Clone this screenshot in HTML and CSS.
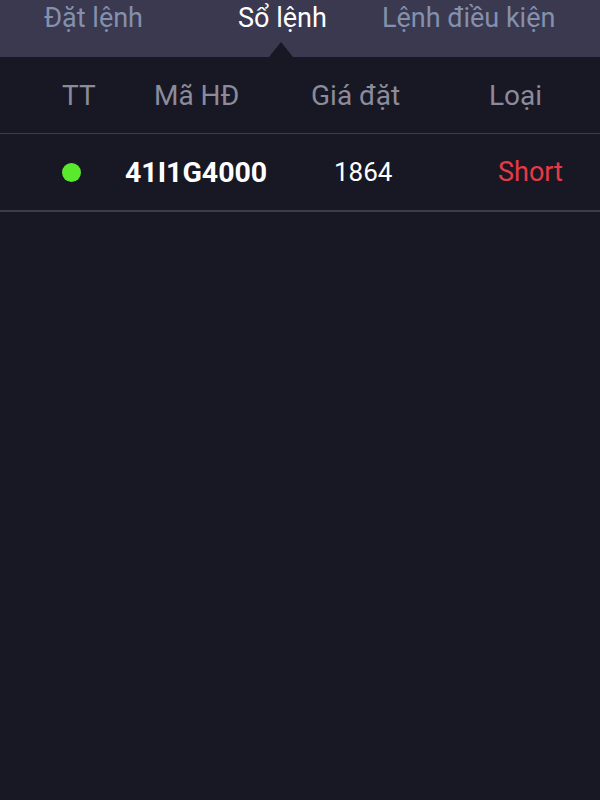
FILE: index.html
```html
<!DOCTYPE html>
<html lang="vi">
<head>
<meta charset="utf-8">
<link rel="stylesheet" href="styles.css">
</head>
<body>
<nav class="tabs">
  <div class="tab">Đặt lệnh</div>
  <div class="tab active">Sổ lệnh</div>
  <div class="tab">Lệnh điều kiện</div>
</nav>
<div class="table">
  <div class="head">
    <div>TT</div>
    <div>Mã HĐ</div>
    <div>Giá đặt</div>
    <div>Loại</div>
  </div>
  <div class="row">
    <div class="cell-dot"><span class="dot"></span></div>
    <div class="code">41I1G4000</div>
    <div class="price">1864</div>
    <div class="type short">Short</div>
  </div>
</div>
</body>
</html>
```
FILE: styles.css
```css
html, body {
  margin: 0;
  padding: 0;
  background: #181824;
  height: 100%;
}
body {
  font-family: Roboto, "Noto Sans", sans-serif;
  width: 600px;
  height: 800px;
  overflow: hidden;
}
.tabs {
  position: relative;
  height: 57px;
  background: #3a3950;
  display: grid;
  grid-template-columns: 194px 144px 1fr;
  padding-left: 44px;
  box-sizing: border-box;
}
.tab {
  font-size: 27px;
  color: #8490ad;
  line-height: 37px;
  white-space: nowrap;
}
.tab.active {
  color: #ffffff;
  position: relative;
}
.tab.active::after {
  content: "";
  position: absolute;
  left: 31px;
  top: 42px;
  width: 0;
  height: 0;
  border-left: 12px solid transparent;
  border-right: 12px solid transparent;
  border-bottom: 15px solid #181824;
}
.head {
  display: grid;
  grid-template-columns: 92px 157px 178px 1fr;
  padding-left: 62px;
  height: 76px;
  align-items: center;
  border-bottom: 1px solid #3b3b4c;
  font-size: 28px;
  color: #8b8b9b;
  white-space: nowrap;
}
.row {
  display: grid;
  grid-template-columns: 63px 209px 164px 1fr;
  padding-left: 62px;
  height: 76px;
  align-items: center;
  border-bottom: 2px solid #3b3b4c;
  white-space: nowrap;
}
.cell-dot {
  display: flex;
  align-items: center;
}
.dot {
  width: 19px;
  height: 19px;
  border-radius: 50%;
  background: #5aea2c;
}
.code {
  font-size: 28.5px;
  font-weight: 700;
  color: #ffffff;
}
.price {
  font-size: 26px;
  color: #ffffff;
}
.short {
  font-size: 27px;
  color: #e63a45;
}
```
